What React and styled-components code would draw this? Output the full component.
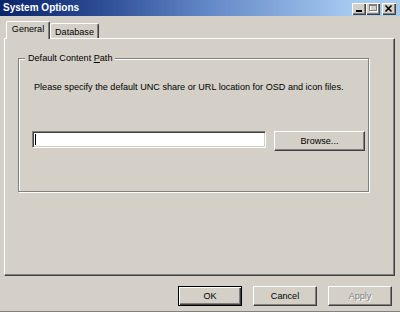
import styled, { createGlobalStyle } from 'styled-components'

const GlobalStyle = createGlobalStyle`
  html, body {
    margin: 0;
    padding: 0;
    background: #d4d0c8;
    overflow: hidden;
  }
  * {
    box-sizing: border-box;
  }
`

const Window = styled.div`
  width: 400px;
  height: 312px;
  display: flex;
  flex-direction: column;
  background: #d4d0c8;
  border-bottom: 1px solid #808080;
  font-family: "Liberation Sans", Arial, sans-serif;
  font-size: 9.1px;
  color: #000;
`

const TitleBar = styled.div`
  height: 16px;
  flex: 0 0 16px;
  display: flex;
  align-items: flex-start;
  justify-content: space-between;
  padding: 0 4px 0 3px;
  background: linear-gradient(to right, #0a246a 0%, #2c4c94 25%, #5f84c4 50%, #a6caf0 88%, #a6caf0 100%);
`

const Title = styled.span`
  color: #fff;
  font-weight: bold;
  font-size: 10px;
  line-height: 16px;
  white-space: nowrap;
`

const TitleButtons = styled.div`
  display: flex;
  margin-top: 3px;
`

const TitleButton = styled.div`
  width: 14px;
  height: 12px;
  margin-left: ${(p) => (p.$gap ? '2px' : '0')};
  background: #d4d0c8;
  box-shadow: inset 1px 1px 0 #fff, inset -1px -1px 0 #404040, inset -2px -2px 0 #808080;
  display: flex;

  svg {
    display: block;
  }
`

const Body = styled.div`
  flex: 1;
  display: flex;
  flex-direction: column;
  padding: 5px 5px 0 4px;
`

const TabStrip = styled.div`
  height: 17px;
  display: flex;
  align-items: flex-end;
  padding-left: 2px;
`

const Tab = styled.div`
  position: relative;
  width: ${(p) => p.$width}px;
  height: ${(p) => (p.$active ? 18 : 15)}px;
  margin-bottom: ${(p) => (p.$active ? '-1px' : '0')};
  z-index: ${(p) => (p.$active ? 1 : 0)};
  padding-top: ${(p) => (p.$active ? 1 : 2)}px;
  background: #d4d0c8;
  border-top: 1px solid #fff;
  border-left: 1px solid #fff;
  border-right: 1px solid #404040;
  border-radius: 2px 2px 0 0;
  box-shadow: inset -1px 0 0 #808080;
  text-align: center;
  line-height: 12px;
  white-space: nowrap;
`

const Panel = styled.div`
  height: 238px;
  flex: 0 0 238px;
  border-top: 1px solid #fff;
  border-left: 1px solid #fff;
  border-right: 1px solid #404040;
  border-bottom: 1px solid #404040;
  box-shadow: inset -1px -1px 0 #808080;
  padding: 19px 0 0 13px;
`

const GroupBox = styled.div`
  position: relative;
  width: 351px;
  height: 134px;
  border: 1px solid #808080;
  box-shadow: inset 1px 1px 0 #fff, 1px 1px 0 #fff;
  padding: 22px 0 0 15px;
`

const Legend = styled.span`
  position: absolute;
  top: -7px;
  left: 6px;
  padding: 0 3px;
  background: #d4d0c8;
  line-height: 12px;
  white-space: nowrap;

  u {
    text-decoration: underline;
    text-underline-offset: 1px;
  }
`

const Description = styled.div`
  line-height: 12px;
  white-space: nowrap;
`

const PathRow = styled.div`
  display: flex;
  align-items: flex-start;
  gap: 8px;
  margin: 38px 0 0 -2px;
`

const Field = styled.div`
  width: 234px;
  height: 17px;
  background: #fff;
  border-top: 1px solid #808080;
  border-left: 1px solid #808080;
  border-right: 1px solid #fff;
  border-bottom: 1px solid #fff;
  box-shadow: inset 1px 1px 0 #404040, inset -1px -1px 0 #d4d0c8;
  padding: 2px 0 0 2px;
`

const Caret = styled.div`
  width: 1px;
  height: 11px;
  background: #000;
`

const Button = styled.div`
  width: ${(p) => p.$width || 64}px;
  height: 20px;
  display: flex;
  align-items: center;
  justify-content: center;
  background: #d4d0c8;
  border: 1px solid ${(p) => (p.$default ? '#000' : '#fff')};
  border-right-color: ${(p) => (p.$default ? '#000' : '#404040')};
  border-bottom-color: ${(p) => (p.$default ? '#000' : '#404040')};
  box-shadow: ${(p) =>
    p.$default
      ? 'inset 1px 1px 0 #fff, inset -1px -1px 0 #404040, inset -2px -2px 0 #808080'
      : 'inset -1px -1px 0 #808080'};
  color: ${(p) => (p.$disabled ? '#808080' : '#000')};
  text-shadow: ${(p) => (p.$disabled ? '1px 1px 0 #fff' : 'none')};
  white-space: nowrap;
`

const Footer = styled.div`
  display: flex;
  justify-content: flex-end;
  gap: 11px;
  padding: 10px 3px 0 0;
`

const MinimizeIcon = () => (
  <svg width="14" height="12" viewBox="0 0 14 12">
    <rect x="4" y="7" width="6" height="2" fill="#000" />
  </svg>
)

const MaximizeIcon = () => (
  <svg width="14" height="12" viewBox="0 0 14 12">
    <rect x="4.5" y="2.5" width="7" height="6" fill="none" stroke="#fff" />
    <rect x="3.5" y="1.5" width="7" height="6" fill="none" stroke="#808080" />
    <rect x="3" y="2" width="8" height="1" fill="#808080" />
  </svg>
)

const CloseIcon = () => (
  <svg width="14" height="12" viewBox="0 0 14 12">
    <path d="M3.5 2.5 L9.5 8.5 M9.5 2.5 L3.5 8.5" stroke="#000" strokeWidth="1.6" />
  </svg>
)

export default function App() {
  return (
    <>
      <GlobalStyle />
      <Window>
        <TitleBar>
          <Title>System Options</Title>
          <TitleButtons>
            <TitleButton>
              <MinimizeIcon />
            </TitleButton>
            <TitleButton>
              <MaximizeIcon />
            </TitleButton>
            <TitleButton $gap>
              <CloseIcon />
            </TitleButton>
          </TitleButtons>
        </TitleBar>
        <Body>
          <TabStrip>
            <Tab $active $width={44}>General</Tab>
            <Tab $width={49}>Database</Tab>
          </TabStrip>
          <Panel>
            <GroupBox>
              <Legend>
                Default Content <u>P</u>ath
              </Legend>
              <Description>
                Please specify the default UNC share or URL location for OSD and icon files.
              </Description>
              <PathRow>
                <Field>
                  <Caret />
                </Field>
                <Button $width={91}>Browse...</Button>
              </PathRow>
            </GroupBox>
          </Panel>
          <Footer>
            <Button $default>OK</Button>
            <Button>Cancel</Button>
            <Button $disabled>Apply</Button>
          </Footer>
        </Body>
      </Window>
    </>
  )
}
